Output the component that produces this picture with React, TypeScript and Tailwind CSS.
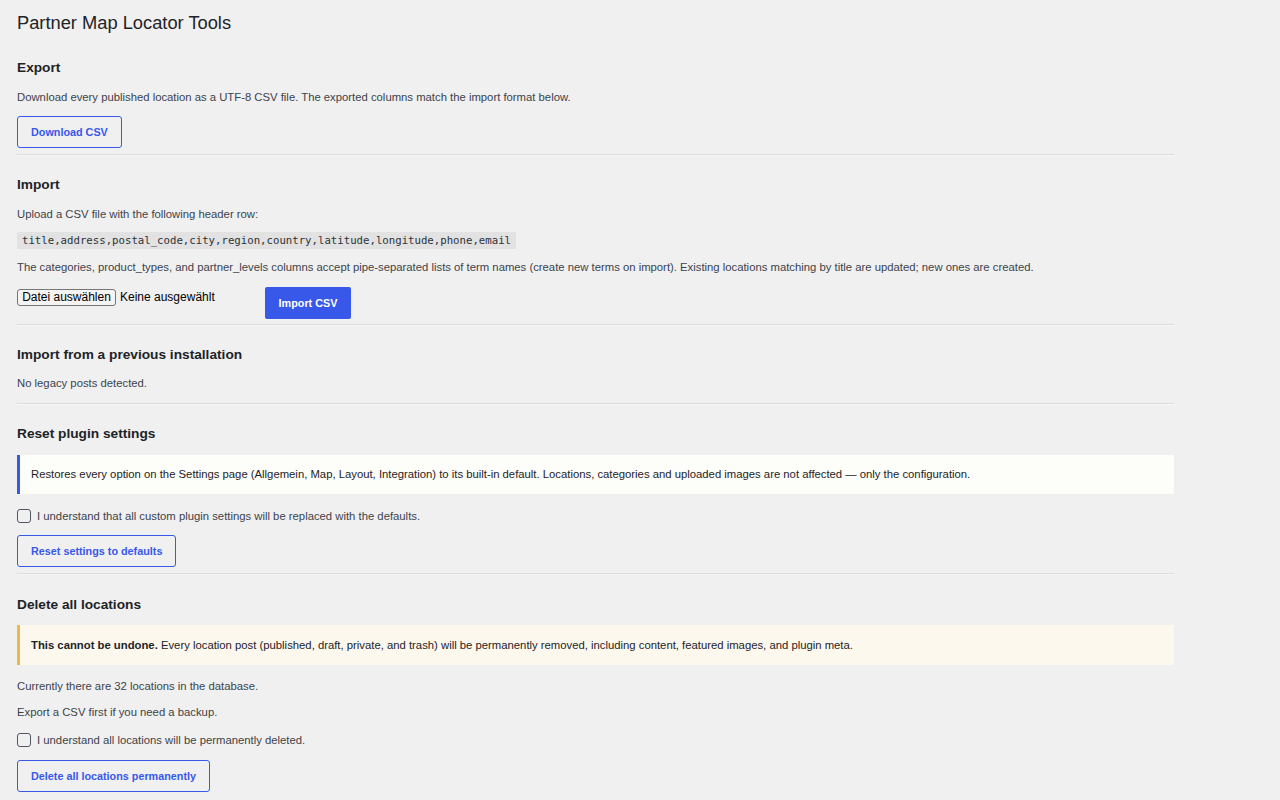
import React from "react";

const font = { fontFamily: '"Liberation Sans", Arial, sans-serif' };

function OutlineButton({ children }: { children: React.ReactNode }) {
  return (
    <button className="h-8 rounded-[3px] border border-[#3858e9] bg-transparent px-[13px] text-[10.8px] font-semibold text-[#3858e9]">
      {children}
    </button>
  );
}

function Divider() {
  return <div className="w-full border-t border-[#dcdcde] border-b border-b-[#f6f7f7]" />;
}

function CheckRow({ label }: { label: string }) {
  return (
    <label className="flex h-4 items-center gap-[6px] text-[11.3px] leading-4 text-[#3c434a]">
      <span className="h-[14px] w-[14px] rounded-[3px] border border-[#50575e] bg-transparent" />
      {label}
    </label>
  );
}

function Heading({ children, className }: { children: React.ReactNode; className: string }) {
  return (
    <h2 className={`text-[13.7px] font-semibold leading-5 text-[#1d2327] ${className}`}>{children}</h2>
  );
}

export default function App() {
  return (
    <div className="min-h-screen bg-[#f0f0f1] text-[#3c434a]" style={font}>
      <div className="w-[1174px] pl-[17px] pt-[9px] pb-[8px]">
        <h1 className="text-[18.3px] font-normal leading-[28px] text-[#1d2327]">
          Partner Map Locator Tools
        </h1>

        <Heading className="mt-[21px]">Export</Heading>
        <p className="mt-[11px] text-[11.3px] leading-4">
          Download every published location as a UTF-8 CSV file. The exported columns match the import format below.
        </p>
        <div className="mt-[11px] flex">
          <OutlineButton>Download CSV</OutlineButton>
        </div>
        <div className="mt-[6px]">
          <Divider />
        </div>

        <Heading className="mt-[19px]">Import</Heading>
        <p className="mt-[11px] text-[11.3px] leading-4">Upload a CSV file with the following header row:</p>
        <div className="mt-[10px] flex">
          <code
            className="block h-[17px] bg-[#e2e2e3] px-[5px] text-[10.7px] leading-[17px] text-[#2c3338]"
            style={{ fontFamily: '"DejaVu Sans Mono", Menlo, monospace' }}
          >
            title,address,postal_code,city,region,country,latitude,longitude,phone,email
          </code>
        </div>
        <p className="mt-[10px] text-[11.3px] leading-4">
          The categories, product_types, and partner_levels columns accept pipe-separated lists of term names (create new terms on import). Existing locations matching by title are updated; new ones are created.
        </p>
        <div className="mt-[12px] flex items-start">
          <div className="flex w-[248px] items-center pt-[2px] text-[12px]">
            <span className="h-[17px] w-[99px] rounded-[3px] border border-[#767676] bg-[#f4f4f4] text-center leading-[15px] text-black">
              Datei auswählen
            </span>
            <span className="ml-[4px] leading-[15px] text-black">Keine ausgewählt</span>
          </div>
          <button className="h-8 w-[86px] rounded-[2px] bg-[#3858e9] text-[10.8px] font-semibold text-white">
            Import CSV
          </button>
        </div>
        <div className="mt-[5px]">
          <Divider />
        </div>

        <Heading className="mt-[19px]">Import from a previous installation</Heading>
        <p className="mt-[10px] text-[11.3px] leading-4">No legacy posts detected.</p>
        <div className="mt-[12px]">
          <Divider />
        </div>

        <Heading className="mt-[19px]">Reset plugin settings</Heading>
        <div className="mt-[11px] flex h-[39px] items-center border-l-[3px] border-[#3858e9] bg-[#fdfdf9] pl-[11px] text-[11.3px] text-[#1d2327]">
          Restores every option on the Settings page (Allgemein, Map, Layout, Integration) to its built-in default. Locations, categories and uploaded images are not affected — only the configuration.
        </div>
        <div className="mt-[14px]">
          <CheckRow label="I understand that all custom plugin settings will be replaced with the defaults." />
        </div>
        <div className="mt-[11px] flex">
          <OutlineButton>Reset settings to defaults</OutlineButton>
        </div>
        <div className="mt-[6px]">
          <Divider />
        </div>

        <Heading className="mt-[20px]">Delete all locations</Heading>
        <div className="mt-[10px] flex h-[40px] items-center border-l-[3px] border-[#f0b849] bg-[#fcf8ee] pl-[11px] text-[11.3px] text-[#1d2327]">
          <span>
            <strong className="font-bold">This cannot be undone.</strong> Every location post (published, draft, private, and trash) will be permanently removed, including content, featured images, and plugin meta.
          </span>
        </div>
        <p className="mt-[13px] text-[11.3px] leading-4">Currently there are 32 locations in the database.</p>
        <p className="mt-[10px] text-[11.3px] leading-4">Export a CSV first if you need a backup.</p>
        <div className="mt-[12px]">
          <CheckRow label="I understand all locations will be permanently deleted." />
        </div>
        <div className="mt-[12px] flex">
          <OutlineButton>Delete all locations permanently</OutlineButton>
        </div>
      </div>
    </div>
  );
}
